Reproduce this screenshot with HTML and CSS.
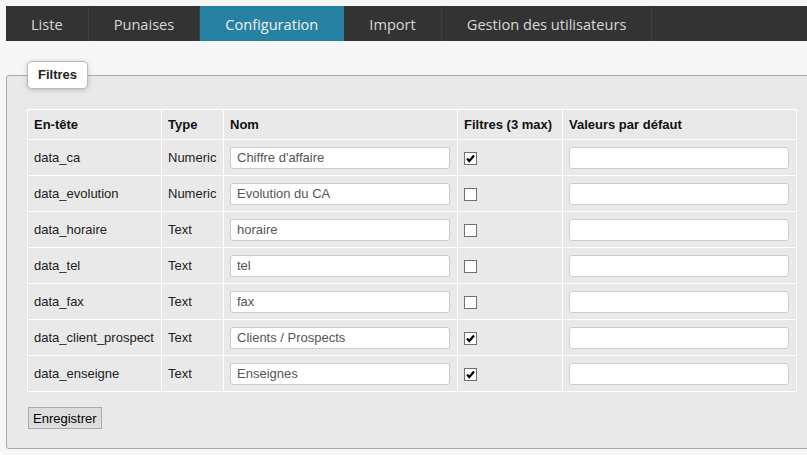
FILE: index.html
```html
<!DOCTYPE html>
<html lang="fr">
<head>
    <meta charset="UTF-8">
    <title>Configuration</title>
    <link rel="stylesheet" href="styles.css">
</head>
<body>
<div class="page">
    <ul class="menu">
        <li><a href="#">Liste</a></li>
        <li><a href="#">Punaises</a></li>
        <li class="active"><a href="#">Configuration</a></li>
        <li><a href="#">Import</a></li>
        <li><a href="#">Gestion des utilisateurs</a></li>
    </ul>

    <form class="config">
        <fieldset>
            <legend>Filtres</legend>
            <table class="grid">
                <tr>
                    <th class="c-head">En-tête</th>
                    <th class="c-type">Type</th>
                    <th class="c-name">Nom</th>
                    <th class="c-filter">Filtres (3 max)</th>
                    <th>Valeurs par défaut</th>
                </tr>
                <tr>
                    <td>data_ca</td><td>Numeric</td>
                    <td><input type="text" value="Chiffre d'affaire"></td>
                    <td><span class="check on"><svg viewBox="0 0 11 11"><path d="M2 5.5 L4.3 8 L9 2.5" /></svg></span></td>
                    <td><input type="text"></td>
                </tr>
                <tr>
                    <td>data_evolution</td><td>Numeric</td>
                    <td><input type="text" value="Evolution du CA"></td>
                    <td><span class="check"></span></td>
                    <td><input type="text"></td>
                </tr>
                <tr>
                    <td>data_horaire</td><td>Text</td>
                    <td><input type="text" value="horaire"></td>
                    <td><span class="check"></span></td>
                    <td><input type="text"></td>
                </tr>
                <tr>
                    <td>data_tel</td><td>Text</td>
                    <td><input type="text" value="tel"></td>
                    <td><span class="check"></span></td>
                    <td><input type="text"></td>
                </tr>
                <tr>
                    <td>data_fax</td><td>Text</td>
                    <td><input type="text" value="fax"></td>
                    <td><span class="check"></span></td>
                    <td><input type="text"></td>
                </tr>
                <tr>
                    <td>data_client_prospect</td><td>Text</td>
                    <td><input type="text" value="Clients / Prospects"></td>
                    <td><span class="check on"><svg viewBox="0 0 11 11"><path d="M2 5.5 L4.3 8 L9 2.5" /></svg></span></td>
                    <td><input type="text"></td>
                </tr>
                <tr>
                    <td>data_enseigne</td><td>Text</td>
                    <td><input type="text" value="Enseignes"></td>
                    <td><span class="check on"><svg viewBox="0 0 11 11"><path d="M2 5.5 L4.3 8 L9 2.5" /></svg></span></td>
                    <td><input type="text"></td>
                </tr>
            </table>
            <button type="button" class="save">Enregistrer</button>
        </fieldset>
    </form>
</div>
</body>
</html>
```

FILE: styles.css
```css
html, body {
    margin: 0;
    padding: 0;
    background-color: #f6f6f6;
    overflow: hidden;
}
.page {
    padding: 6px 0 0 6px;
    font-family: "Liberation Sans", Arial, sans-serif;
    font-size: 13px;
    color: #222;
}
.menu {
    display: flex;
    margin: 0;
    padding: 0;
    list-style: none;
    height: 35px;
    background-color: #333;
}
.menu li {
    border-right: 1px solid #3e3e3e;
}
.menu a {
    display: block;
    padding: 0 25px;
    line-height: 36px;
    font-family: "Open Sans", sans-serif;
    font-size: 14.6px;
    color: #d8d8d8;
    text-decoration: none;
}
.menu li.active {
    background-color: #2681a3;
    border-right-color: #2681a3;
}
.menu li.active a {
    color: #f2f2f2;
}
.config {
    margin: 20px 0 0;
}
fieldset {
    width: 770px;
    margin: 0;
    padding: 20px 20px 19px 20px;
    border: 1px solid #aaa;
    border-radius: 3px 0 0 3px;
    background-color: #e9e9e9;
}
legend {
    margin-left: 0;
    padding: 5px 10px 6px;
    background: #fff;
    border: 1px solid #bbb;
    border-radius: 5px;
    box-shadow: 0 1px 5px rgba(0, 0, 0, 0.2);
    font-weight: bold;
    font-size: 13px;
    color: #222;
}
.grid {
    width: 770px;
    border-collapse: collapse;
    border: 1px solid #fff;
}
.grid th, .grid td {
    border: 1px solid #fff;
    padding: 0 6px;
    text-align: left;
    white-space: nowrap;
}
.grid th {
    height: 29px;
    color: #111;
}
.grid td {
    height: 35px;
}
.c-head { width: 121px; }
.c-type { width: 49px; }
.c-name { width: 221px; }
.c-filter { width: 92px; }
.grid input {
    box-sizing: border-box;
    width: 220px;
    height: 22px;
    padding: 0 6px;
    border: 1px solid #ccc;
    border-radius: 3px;
    background: #fff;
    font-family: "Liberation Sans", Arial, sans-serif;
    font-size: 13px;
    color: #555;
    vertical-align: middle;
}
.check {
    display: inline-block;
    box-sizing: border-box;
    width: 13px;
    height: 13px;
    border: 1px solid #707070;
    background: #fff;
    vertical-align: middle;
}
.check svg {
    display: block;
    width: 11px;
    height: 11px;
    fill: none;
    stroke: #000;
    stroke-width: 2.2;
}
.save {
    margin: 15px 0 0 1px;
    padding: 0 4px;
    height: 22px;
    background: #ddd;
    border: 1px solid #aaa;
    border-radius: 0;
    font-family: "Liberation Sans", Arial, sans-serif;
    font-size: 13px;
    color: #000;
}
```
